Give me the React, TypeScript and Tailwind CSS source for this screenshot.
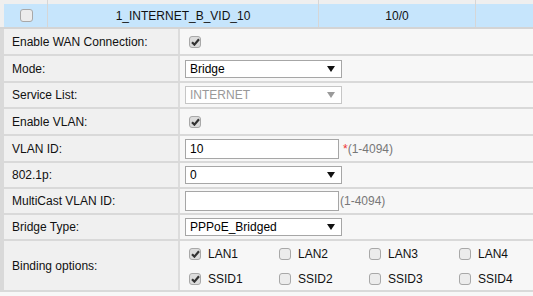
import React from "react";

function Check({ checked, big }: { checked?: boolean; big?: boolean }) {
  const s = big ? "w-[13px] h-[13px]" : "w-[12px] h-[12px]";
  return (
    <span
      className={`${s} shrink-0 inline-flex items-center justify-center rounded-[3px] border border-[#a8a8a8] ${
        checked ? "bg-[#dcdcdc]" : "bg-[#ececec]"
      }`}
    >
      {checked && (
        <svg width="9" height="8" viewBox="0 0 9 8">
          <path d="M1 4.2 L3.4 6.6 L8 1.2" stroke="#333" strokeWidth="2.2" fill="none" />
        </svg>
      )}
    </span>
  );
}

function Select({ value, disabled, w = "w-[157px]" }: { value: string; disabled?: boolean; w?: string }) {
  return (
    <div
      className={`${w} shrink-0 h-[18px] flex items-center justify-between bg-white border ${
        disabled ? "border-[#c6c6c6] text-[#999]" : "border-[#a6a6a6] text-black"
      } pl-[4px] pr-[6px]`}
    >
      <span className="leading-none">{value}</span>
      <svg width="8" height="6" viewBox="0 0 8 6">
        <polygon points="0,0 8,0 4,6" fill={disabled ? "#9a9a9a" : "#111"} />
      </svg>
    </div>
  );
}

function TextInput({ value }: { value: string }) {
  return (
    <div className="w-[154px] shrink-0 h-[20px] flex items-center bg-white border border-[#a6a6a6] pl-[4px] text-black">
      {value}
    </div>
  );
}

function Row({ label, h, children }: { label: string; h: string; children?: React.ReactNode }) {
  return (
    <>
      <div className={`flex ${h}`}>
        <div className="w-[4px] shrink-0 bg-[#d9d9d9]" />
        <div className="w-[174px] shrink-0 bg-[#f0f0f0] pl-[8px] flex items-center text-[#111]">{label}</div>
        <div className="w-[2px] shrink-0 bg-[#dcdcdc]" />
        <div className="flex-1 min-w-0 bg-[#f7f7f7] pl-[5px] flex items-center">{children}</div>
      </div>
      <div className="h-[2px] bg-[#d9d9d9]" />
    </>
  );
}

function Opt({ label, checked }: { label: string; checked?: boolean }) {
  return (
    <div className="w-[90px] shrink-0 flex items-center gap-[7px]">
      <Check checked={checked} />
      <span className="text-[#111]">{label}</span>
    </div>
  );
}

export default function App() {
  return (
    <div
      className="w-[533px] h-[296px] overflow-hidden bg-[#f7f7f7] text-[12px] leading-none"
      style={{ fontFamily: '"Liberation Sans", Arial, sans-serif' }}
    >
      {/* previous row tail */}
      <div className="flex h-[4px] bg-[#efefef]">
        <div className="w-[47px] shrink-0" />
        <div className="w-[1px] shrink-0 bg-[#d6d6d6]" />
        <div className="w-[270px] shrink-0" />
        <div className="w-[1px] shrink-0 bg-[#d6d6d6]" />
        <div className="w-[156px] shrink-0" />
        <div className="w-[1px] shrink-0 bg-[#d6d6d6]" />
        <div className="flex-1" />
      </div>
      {/* highlighted row */}
      <div className="flex h-[23px]">
        <div className="w-[4px] shrink-0 bg-[#efefef]" />
        <div className="w-[43px] shrink-0 bg-[#c6e5fc] flex items-center justify-center pl-[1px]">
          <Check big />
        </div>
        <div className="w-[1px] shrink-0 bg-[#d6d6d6]" />
        <div className="w-[270px] shrink-0 bg-[#c6e5fc] flex items-center justify-center text-[#111] text-[12px]">
          1_INTERNET_B_VID_10
        </div>
        <div className="w-[1px] shrink-0 bg-[#d6d6d6]" />
        <div className="w-[156px] shrink-0 bg-[#c6e5fc] flex items-center justify-center text-[#111]">10/0</div>
        <div className="w-[1px] shrink-0 bg-[#d6d6d6]" />
        <div className="flex-1 bg-[#c6e5fc]" />
      </div>
      <div className="h-[2px] bg-[#d4d4d4]" />

      <Row label="Enable WAN Connection:" h="h-[25px]">
        <span className="ml-[4px] flex">
          <Check checked />
        </span>
      </Row>
      <Row label="Mode:" h="h-[25px]">
        <Select value="Bridge" />
      </Row>
      <Row label="Service List:" h="h-[24px]">
        <Select value="INTERNET" disabled />
      </Row>
      <Row label="Enable VLAN:" h="h-[25px]">
        <span className="ml-[4px] flex">
          <Check checked />
        </span>
      </Row>
      <Row label="VLAN ID:" h="h-[25px]">
        <TextInput value="10" />
        <span className="ml-[4px] text-[#e33]">*</span>
        <span className="text-[#777]">(1-4094)</span>
      </Row>
      <Row label="802.1p:" h="h-[24px]">
        <Select value="0" />
      </Row>
      <Row label="MultiCast VLAN ID:" h="h-[24px]">
        <TextInput value="" />
        <span className="ml-[1px] text-[#777]">(1-4094)</span>
      </Row>
      <Row label="Bridge Type:" h="h-[24px]">
        <Select value="PPPoE_Bridged" />
      </Row>
      <Row label="Binding options:" h="h-[49px]">
        <div className="flex flex-col gap-[13px] ml-[4px] pt-[1px]">
          <div className="flex">
            <Opt label="LAN1" checked />
            <Opt label="LAN2" />
            <Opt label="LAN3" />
            <Opt label="LAN4" />
          </div>
          <div className="flex">
            <Opt label="SSID1" checked />
            <Opt label="SSID2" />
            <Opt label="SSID3" />
            <Opt label="SSID4" />
          </div>
        </div>
      </Row>
    </div>
  );
}
